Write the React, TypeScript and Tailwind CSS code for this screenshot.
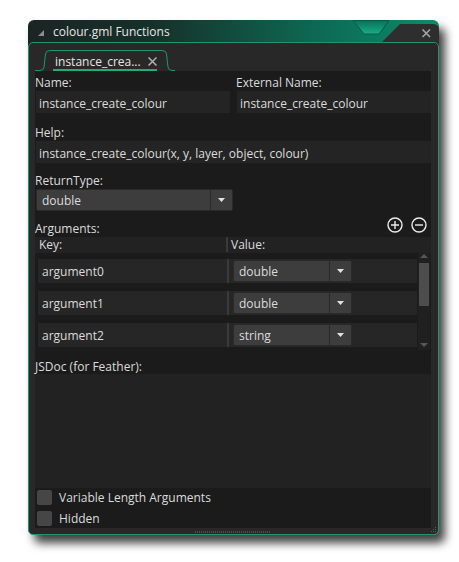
import React from 'react';

const label = 'h-[16px] text-[12px] leading-[19px] text-[#dcdcdc] whitespace-nowrap';
const field = 'mt-[2px] ml-[1px] h-[22px] bg-[#242424] pl-[3px] text-[12px] leading-[25px] text-[#dcdcdc] whitespace-nowrap';

function Caret() {
  return (
    <svg width="7" height="4" viewBox="0 0 7 4">
      <path d="M0 0h7L3.5 4z" fill="#e2e2e2" />
    </svg>
  );
}

function Dropdown({ value, className }: { value: string; className: string }) {
  return (
    <div className={`flex h-[22px] bg-[#3d3d3d] border border-[#2a2a2a] rounded-[2px] ${className}`}>
      <div className="flex-1 pl-[5px] text-[12px] leading-[21px] text-[#dcdcdc]">{value}</div>
      <div className="w-[22px] border-l border-[#2a2a2a] flex items-center justify-center">
        <Caret />
      </div>
    </div>
  );
}

function CircleIcon({ plus }: { plus?: boolean }) {
  return (
    <svg width="16" height="16" viewBox="0 0 16 16">
      <circle cx="8" cy="8" r="7" fill="none" stroke="#ececec" strokeWidth="1.4" />
      <path d={plus ? 'M4 8h8M8 4v8' : 'M4 8h8'} stroke="#ececec" strokeWidth="1.4" />
    </svg>
  );
}

const args = [
  { key: 'argument0', type: 'double' },
  { key: 'argument1', type: 'double' },
  { key: 'argument2', type: 'string' },
];

export default function App() {
  return (
    <div className="min-h-screen bg-white font-['Open_Sans',sans-serif] pt-[20px] pl-[28px]">
      <div className="w-[411px] rounded-[6px] shadow-[6px_8px_10px_rgba(0,0,0,0.75)]">
        {/* Title bar */}
        <div className="relative h-[26px] rounded-t-[6px] bg-[linear-gradient(90deg,#1b2523_0%,#163029_30%,#0e6651_68%,#0a8c6b_100%)] flex items-start pl-[10px] pt-[2px]">
          <svg className="mt-[8px]" width="6" height="6" viewBox="0 0 6 6">
            <path d="M6 0v6H0z" fill="#8c8c8c" />
          </svg>
          <span className="ml-[9px] h-[16px] text-[12px] leading-[19px] text-[#e6e6e6]">colour.gml Functions</span>
          <svg className="absolute left-0 top-0" width="411" height="26" viewBox="0 0 411 26">
            <defs>
              <linearGradient id="notch" x1="0" y1="0" x2="0" y2="1">
                <stop offset="0" stopColor="#0b6f57" />
                <stop offset="1" stopColor="#15b088" />
              </linearGradient>
            </defs>
            <path d="M325 0.5L361 0.5L351 14L336 14Z" fill="url(#notch)" stroke="#0a5a47" strokeWidth="1" />
            <path d="M354 26L354 22L372 4L405 4Q411 4 411 10L411 26Z" fill="#2e2e2e" />
            <path d="M394.5 9.5L402 17M402 9.5L394.5 17" stroke="#a8a8a8" strokeWidth="1.5" />
          </svg>
        </div>

        {/* Panel */}
        <div className="relative z-10 -mt-[4px] border border-[#1a9a6a] rounded-[5px] bg-[#282828] pl-[6px] pr-[7px]">
          {/* Tab strip */}
          <div className="h-[28px] pt-[7px]">
            <div className="relative ml-[9px] w-[122px] h-[21px]">
              <svg className="absolute -left-[9px] top-0" width="140" height="21" viewBox="0 0 140 21">
                <path
                  d="M0 20.5H5Q8.5 20.5 9 17L10.5 4Q11 0.5 15 0.5H127Q131 0.5 131.5 4L133 17Q133.5 20.5 137 20.5H140"
                  fill="none"
                  stroke="#1a9a6a"
                  strokeWidth="1"
                />
              </svg>
              <div className="relative flex items-start pl-[11px] pt-[2px]">
                <span className="h-[16px] text-[12px] leading-[19px] text-[#e6e6e6]">instance_crea...</span>
                <svg className="ml-[7px] mt-[5px]" width="9" height="9" viewBox="0 0 9 9">
                  <path d="M0.5 0.5L8.5 8.5M8.5 0.5L0.5 8.5" stroke="#b0b0b0" strokeWidth="1.5" />
                </svg>
              </div>
              <div className="absolute left-[9px] bottom-0 w-[104px] h-[2px] bg-[#1fae74]" />
            </div>
          </div>

          {/* Content */}
          <div className="bg-[#1b1b1b] h-[457px] w-[396px] flex flex-col">
            <div className="grid grid-cols-[195px_195px] gap-x-[6px] pt-[2px]">
              <div>
                <div className={label}>Name:</div>
                <div className={field}>instance_create_colour</div>
              </div>
              <div>
                <div className={label}>External Name:</div>
                <div className={field}>instance_create_colour</div>
              </div>
            </div>

            <div className={`mt-[10px] ${label}`}>Help:</div>
            <div className={field}>instance_create_colour(x, y, layer, object, colour)</div>

            <div className={`mt-[8px] ${label}`}>ReturnType:</div>
            <Dropdown value="double" className="mt-[2px] ml-[1px] w-[197px]" />

            <div className="mt-[8px] flex items-start justify-between pr-[4px]">
              <div className={label}>Arguments:</div>
              <div className="flex gap-[8px] -mt-[2px]">
                <CircleIcon plus />
                <CircleIcon />
              </div>
            </div>

            {/* Table header */}
            <div className="mt-[2px] h-[16px] bg-[#222222] flex">
              <div className="w-[191px] pl-[4px] text-[12px] leading-[16px] text-[#dcdcdc]">Key:</div>
              <div className="w-[2px] h-[15px] bg-[#3a3a3a]" />
              <div className="pl-[3px] text-[12px] leading-[16px] text-[#dcdcdc]">Value:</div>
            </div>

            {/* Table rows */}
            <div className="flex h-[97px]">
              <div className="flex-1 pl-[3px] pr-[1px] pt-[6px] flex flex-col gap-[8px]">
                {args.map((a) => (
                  <div key={a.key} className="h-[24px] bg-[#262626] flex">
                    <div className="w-[189px] pl-[4px] text-[12px] leading-[26px] text-[#dcdcdc]">{a.key}</div>
                    <div className="w-[2px] bg-[#3a3a3a]" />
                    <div className="pl-[4px] pt-[1px]">
                      <Dropdown value={a.type} className="w-[119px]" />
                    </div>
                  </div>
                ))}
              </div>
              {/* Scrollbar */}
              <div className="w-[12px] bg-[#202020] flex flex-col items-center">
                <svg className="mt-[1px]" width="8" height="4" viewBox="0 0 8 4">
                  <path d="M0 4h8L4 0z" fill="#575757" />
                </svg>
                <div className="mt-[5px] w-[10px] h-[43px] bg-[#4d4d4d]" />
                <div className="flex-1" />
                <svg className="mb-[3px]" width="8" height="4" viewBox="0 0 8 4">
                  <path d="M0 0h8L4 4z" fill="#575757" />
                </svg>
              </div>
              <div className="w-[1px]" />
            </div>

            <div className={`mt-[7px] ${label}`}>JSDoc (for Feather):</div>
            <div className="mt-[1px] h-[114px] bg-[#222222]" />

            <div className="h-[21px] flex items-start">
              <div className="mt-[2px] ml-[2px] w-[15px] h-[15px] rounded-[2px] bg-[#464646]" />
              <span className={`ml-[7px] ${label}`}>Variable Length Arguments</span>
            </div>
            <div className="flex items-start">
              <div className="mt-[2px] ml-[2px] w-[15px] h-[15px] rounded-[2px] bg-[#464646]" />
              <span className={`ml-[7px] ${label}`}>Hidden</span>
            </div>
          </div>

          {/* Bottom strip with grip */}
          <div className="h-[6px] flex justify-center pt-[3px]">
            <div className="w-[76px] h-[2px] bg-[repeating-linear-gradient(90deg,#4c4c4c_0px,#4c4c4c_1px,transparent_1px,transparent_2px)]" />
          </div>
          <svg className="absolute right-[1px] bottom-[1px]" width="6" height="6" viewBox="0 0 6 6">
            <rect x="4" y="0" width="1" height="1" fill="#5a5a5a" />
            <rect x="2" y="2" width="1" height="1" fill="#5a5a5a" />
            <rect x="4" y="2" width="1" height="1" fill="#5a5a5a" />
            <rect x="0" y="4" width="1" height="1" fill="#5a5a5a" />
            <rect x="2" y="4" width="1" height="1" fill="#5a5a5a" />
            <rect x="4" y="4" width="1" height="1" fill="#5a5a5a" />
          </svg>
        </div>
      </div>
    </div>
  );
}
